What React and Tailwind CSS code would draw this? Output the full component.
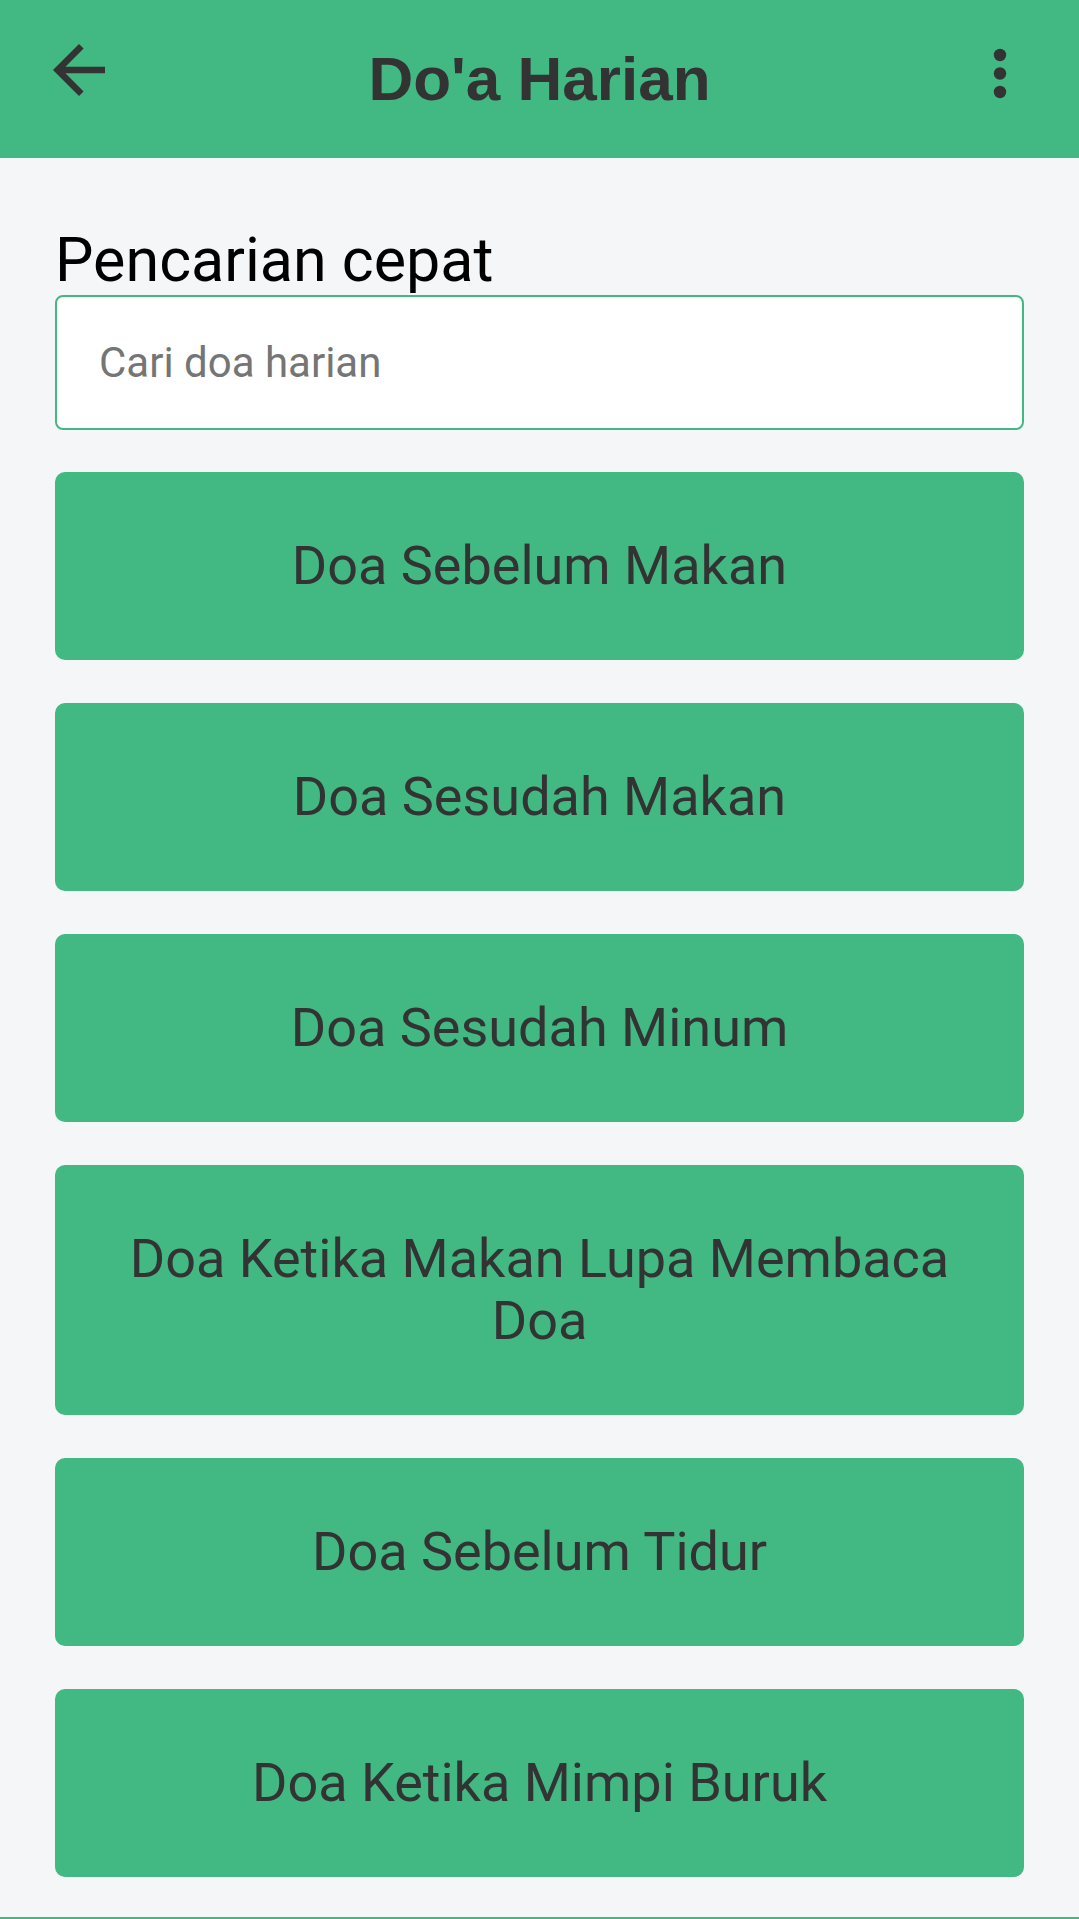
import React from "react";

const items = [
  "Doa Sebelum Makan",
  "Doa Sesudah Makan",
  "Doa Sesudah Minum",
  "Doa Ketika Makan Lupa Membaca Doa",
  "Doa Sebelum Tidur",
  "Doa Ketika Mimpi Buruk",
];

export default function App() {
  return (
    <div className="w-[1079px] min-h-[1919px] bg-[#f5f6f8] flex flex-col" style={{ fontFamily: "Roboto, 'Liberation Sans', sans-serif" }}>
      <header className="h-[158px] bg-[#42b883] grid grid-cols-[1fr_auto_1fr] items-start px-[40px] pt-[31px] shrink-0">
        <div className="flex justify-start">
          <svg width="78" height="78" viewBox="0 0 24 24" className="shrink-0">
            <path d="M20 11H7.83l5.59-5.59L12 4l-8 8 8 8 1.41-1.41L7.83 13H20v-2z" fill="#333" />
          </svg>
        </div>
        <h1
          className="text-[62px] leading-[73px] font-bold text-[#333] mt-[11px]"
          style={{ fontFamily: "'Liberation Sans', Arial, sans-serif" }}
        >
          Do'a Harian
        </h1>
        <div className="flex justify-end">
          <svg width="20" height="60" viewBox="0 0 20 60" className="shrink-0 mt-[12px] mr-[29px]">
            <circle cx="10" cy="12" r="6.2" fill="#333" />
            <circle cx="10" cy="30.5" r="6.2" fill="#333" />
            <circle cx="10" cy="49" r="6.2" fill="#333" />
          </svg>
        </div>
      </header>
      <main className="px-[55px] pt-[67px] flex flex-col">
        <label className="block text-[61px] leading-[70px] text-black">Pencarian cepat</label>
        <input
          type="text"
          placeholder="Cari doa harian"
          className="h-[135px] w-full bg-white border-2 border-[#42b883] rounded-[8px] pl-[42px] text-[42px] text-[#333] placeholder:text-[#757575] outline-none"
        />
        <div className="flex flex-col gap-[43px] mt-[42px]">
          {items.map((t) => (
            <button
              key={t}
              className="w-full bg-[#42b883] rounded-[10px] py-[63px] px-[60px] text-[54px] leading-[62px] text-[#333] text-center"
            >
              {t}
            </button>
          ))}
        </div>
      </main>
      <div className="mt-[40px] h-[4px] bg-[#42b883] w-full"></div>
    </div>
  );
}
